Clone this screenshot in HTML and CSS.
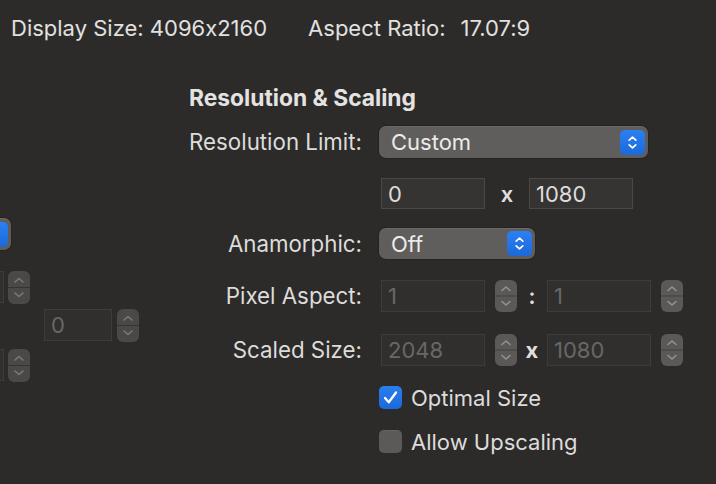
FILE: index.html
```html
<!DOCTYPE html>
<html>
<head>
<meta charset="utf-8">
<link rel="stylesheet" href="styles.css">
</head>
<body>
<header class="summary">
  <span class="summary-item">Display Size: 4096x2160</span>
  <span class="summary-item ratio"><span>Aspect Ratio:</span><span>17.07:9</span></span>
</header>
<main class="panes">
  <section class="side">
    <div class="popup side-popup">
      <span class="popup-value"></span>
      <span class="popup-btn"><svg width="25" height="25" viewBox="0 0 25 25"><path d="M9.2 10.2 L12.5 7.2 L15.8 10.2 M9.2 14.8 L12.5 17.8 L15.8 14.8" fill="none" stroke="#fff" stroke-width="1.7" stroke-linecap="round" stroke-linejoin="round"/></svg></span>
    </div>
    <div class="side-row side-row-a">
      <span class="field dim side-field"></span>
      <span class="stepper stepper-dark"><svg width="22" height="33" viewBox="0 0 22 33"><line x1="0" y1="16.5" x2="22" y2="16.5" stroke="rgba(0,0,0,0.28)" stroke-width="1"/><path d="M7 11 L11 7.5 L15 11 M7 22 L11 25.5 L15 22" fill="none" stroke="currentColor" stroke-width="1.6" stroke-linecap="round" stroke-linejoin="round"/></svg></span>
    </div>
    <div class="side-row side-row-b">
      <span class="field dim short-field">0</span>
      <span class="stepper stepper-dark"><svg width="22" height="33" viewBox="0 0 22 33"><line x1="0" y1="16.5" x2="22" y2="16.5" stroke="rgba(0,0,0,0.28)" stroke-width="1"/><path d="M7 11 L11 7.5 L15 11 M7 22 L11 25.5 L15 22" fill="none" stroke="currentColor" stroke-width="1.6" stroke-linecap="round" stroke-linejoin="round"/></svg></span>
    </div>
    <div class="side-row side-row-c">
      <span class="field dim side-field"></span>
      <span class="stepper stepper-dark"><svg width="22" height="33" viewBox="0 0 22 33"><line x1="0" y1="16.5" x2="22" y2="16.5" stroke="rgba(0,0,0,0.28)" stroke-width="1"/><path d="M7 11 L11 7.5 L15 11 M7 22 L11 25.5 L15 22" fill="none" stroke="currentColor" stroke-width="1.6" stroke-linecap="round" stroke-linejoin="round"/></svg></span>
    </div>
  </section>

  <section class="form">
    <h2 class="form-title">Resolution &amp; Scaling</h2>

    <span class="form-label">Resolution Limit:</span>
    <div class="control">
      <div class="popup popup-wide">
        <span class="popup-value">Custom</span>
        <span class="popup-btn"><svg width="25" height="25" viewBox="0 0 25 25"><path d="M9.2 10.2 L12.5 7.2 L15.8 10.2 M9.2 14.8 L12.5 17.8 L15.8 14.8" fill="none" stroke="#fff" stroke-width="1.7" stroke-linecap="round" stroke-linejoin="round"/></svg></span>
      </div>
    </div>

    <span class="form-label"></span>
    <div class="control fields">
      <span class="field">0</span>
      <span class="sep sep-wide">x</span>
      <span class="field">1080</span>
    </div>

    <span class="form-label">Anamorphic:</span>
    <div class="control">
      <div class="popup popup-mid">
        <span class="popup-value">Off</span>
        <span class="popup-btn"><svg width="25" height="25" viewBox="0 0 25 25"><path d="M9.2 10.2 L12.5 7.2 L15.8 10.2 M9.2 14.8 L12.5 17.8 L15.8 14.8" fill="none" stroke="#fff" stroke-width="1.7" stroke-linecap="round" stroke-linejoin="round"/></svg></span>
      </div>
    </div>

    <span class="form-label">Pixel Aspect:</span>
    <div class="control fields">
      <span class="field dim">1</span>
      <span class="stepper"><svg width="22" height="32" viewBox="0 0 22 32"><line x1="0" y1="16" x2="22" y2="16" stroke="rgba(0,0,0,0.28)" stroke-width="1"/><path d="M7 10.5 L11 7 L15 10.5 M7 21.5 L11 25 L15 21.5" fill="none" stroke="currentColor" stroke-width="1.6" stroke-linecap="round" stroke-linejoin="round"/></svg></span>
      <span class="sep">:</span>
      <span class="field dim">1</span>
      <span class="stepper"><svg width="22" height="32" viewBox="0 0 22 32"><line x1="0" y1="16" x2="22" y2="16" stroke="rgba(0,0,0,0.28)" stroke-width="1"/><path d="M7 10.5 L11 7 L15 10.5 M7 21.5 L11 25 L15 21.5" fill="none" stroke="currentColor" stroke-width="1.6" stroke-linecap="round" stroke-linejoin="round"/></svg></span>
    </div>

    <span class="form-label">Scaled Size:</span>
    <div class="control fields">
      <span class="field dim">2048</span>
      <span class="stepper"><svg width="22" height="32" viewBox="0 0 22 32"><line x1="0" y1="16" x2="22" y2="16" stroke="rgba(0,0,0,0.28)" stroke-width="1"/><path d="M7 10.5 L11 7 L15 10.5 M7 21.5 L11 25 L15 21.5" fill="none" stroke="currentColor" stroke-width="1.6" stroke-linecap="round" stroke-linejoin="round"/></svg></span>
      <span class="sep sep-bold">x</span>
      <span class="field dim">1080</span>
      <span class="stepper"><svg width="22" height="32" viewBox="0 0 22 32"><line x1="0" y1="16" x2="22" y2="16" stroke="rgba(0,0,0,0.28)" stroke-width="1"/><path d="M7 10.5 L11 7 L15 10.5 M7 21.5 L11 25 L15 21.5" fill="none" stroke="currentColor" stroke-width="1.6" stroke-linecap="round" stroke-linejoin="round"/></svg></span>
    </div>

    <span class="form-label"></span>
    <label class="control check-row">
      <span class="check check-on"><svg width="23" height="23" viewBox="0 0 23 23"><path d="M6 12 L9.8 16.3 L17 6.5" fill="none" stroke="#fff" stroke-width="2.3" stroke-linecap="round" stroke-linejoin="round"/></svg></span>
      <span class="check-text">Optimal Size</span>
    </label>

    <span class="form-label"></span>
    <label class="control check-row">
      <span class="check check-off"></span>
      <span class="check-text">Allow Upscaling</span>
    </label>
  </section>
</main>
</body>
</html>
```

FILE: styles.css
```css
html, body {
  margin: 0;
  padding: 0;
}

body {
  width: 716px;
  height: 484px;
  overflow: hidden;
  background: #2c2b2a;
  color: #dddcdb;
  font-family: Inter, "Noto Sans", "Liberation Sans", sans-serif;
  font-size: 22px;
  line-height: 26px;
  font-feature-settings: "calt" 0;
}

.summary {
  display: flex;
  align-items: center;
  gap: 41px;
  height: 56px;
  padding-left: 11px;
  font-size: 22px;
  color: #e2e1e0;
}

.ratio {
  display: flex;
  gap: 15px;
}

.panes {
  display: flex;
  margin-top: 24px;
}

/* partially visible neighbouring pane */
.side {
  flex: none;
  width: 240px;
  margin-left: -100px;
  display: flex;
  flex-direction: column;
  padding-top: 138px;
}

.side-popup {
  width: 111px;
}

.side-row {
  display: flex;
  align-items: center;
  height: 34px;
  gap: 4px;
}

.side-row-a { margin-top: 20px; }
.side-row-b { margin-top: 4px; padding-left: 144px; gap: 5px; }
.side-row-c { margin-top: 6px; }

/* main form */
.form {
  margin-left: 49px;
  display: grid;
  grid-template-columns: 173px auto;
  grid-template-rows: 36px 52px 51px 49px 56px 52px 43px 45px;
  column-gap: 17px;
  align-items: center;
}

.form-title {
  grid-column: 1 / -1;
  margin: 0;
  font-size: 22.8px;
  font-weight: 700;
  color: #e4e3e2;
}

.form-label {
  text-align: right;
  white-space: nowrap;
  font-size: 22.3px;
}

.control {
  display: flex;
  align-items: center;
}

.control.fields {
  padding-left: 2px;
}

.popup {
  box-sizing: border-box;
  display: flex;
  align-items: center;
  height: 32px;
  padding: 0 3px 0 12px;
  border-radius: 7px;
  background: #5f5e5c;
  box-shadow: inset 0 1px 0 rgba(255, 255, 255, 0.07), 0 0 0 1px rgba(0, 0, 0, 0.18);
}

.popup-wide { width: 269px; }
.popup-mid { width: 156px; height: 31px; }

.popup-value {
  flex: 1;
  color: #ecebea;
}

.popup-btn {
  display: flex;
  flex: none;
  width: 25px;
  height: 25px;
  border-radius: 5px;
  background: linear-gradient(#2c80f2, #1b69db);
}

.field {
  flex: none;
  box-sizing: border-box;
  display: flex;
  align-items: center;
  width: 104px;
  height: 31px;
  padding-left: 6px;
  background: #353433;
  border: 1px solid #494847;
  color: #dddcdb;
}

.field.dim {
  height: 32px;
  background: #302f2e;
  border-color: #3d3c3b;
  color: #686766;
}

.field.side-field { width: 104px; }
.field.short-field { width: 68px; }

.stepper {
  flex: none;
  display: flex;
  width: 22px;
  height: 32px;
  margin-left: 10px;
  border-radius: 6px;
  background: #5a5958;
  color: #939291;
  overflow: hidden;
}

.stepper.stepper-dark {
  margin-left: 0;
  height: 33px;
  background: #4a4948;
  color: #7b7a79;
}

.sep {
  flex: none;
  width: 30px;
  text-align: center;
  color: #e0dfde;
  font-weight: 600;
}

.sep.sep-wide { width: 44px; }
.sep.sep-bold { font-weight: 700; }

.check-row {
  gap: 9px;
}

.check {
  display: flex;
  flex: none;
  box-sizing: border-box;
  width: 23px;
  height: 23px;
  border-radius: 5px;
}

.check-on {
  background: linear-gradient(#2a7ef0, #1b69db);
}

.check-off {
  background: #5b5a59;
  box-shadow: inset 0 1px 0 rgba(255, 255, 255, 0.06);
}

.check-text {
  color: #dddcdb;
}
```
